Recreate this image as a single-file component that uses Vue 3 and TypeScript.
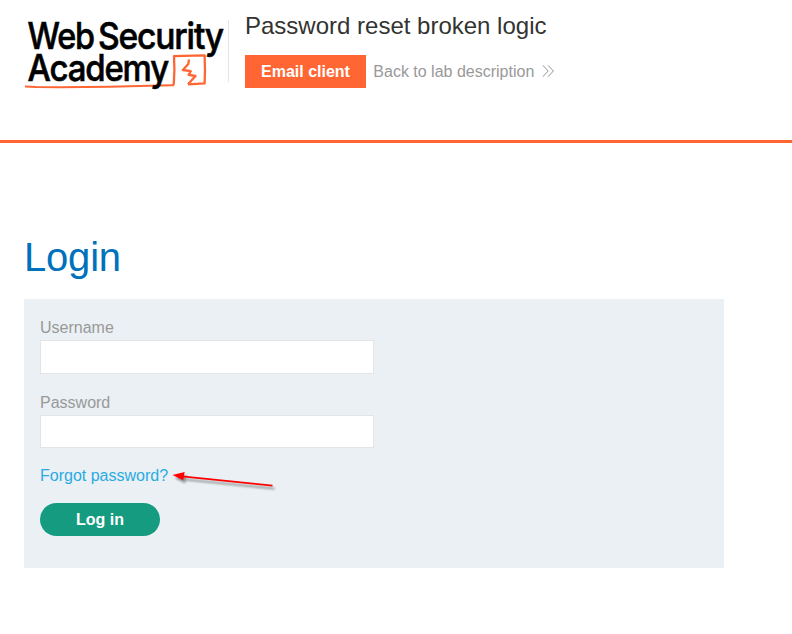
<script setup lang="ts">
import { ref } from 'vue'

const username = ref('')
const password = ref('')
</script>

<template>
  <div class="page">
    <header class="lab-header">
      <svg class="logo" viewBox="24 16 204 76" role="img" aria-label="Web Security Academy">
        <g class="sketch">
          <path class="bolt" d="M189 59.5 L188.3 64 L182.8 70 L190.8 71.2 L188.6 74.8 L195.5 76 L188 84.2" />
          <path d="M188 84.4 L204.6 83.4 L205 70 L204.6 55.4 L174 56.2 L174.4 70 L173.7 85" />
          <path class="line" d="M174 85.2 L160 85.4 L110 86.8 L60 87.3 L36 87 L25 86.6" />
        </g>
        <g class="wordmark">
          <text x="27.5" y="48.5" textLength="66.5" lengthAdjust="spacingAndGlyphs">Web</text>
          <text x="98" y="48.5" textLength="125" lengthAdjust="spacingAndGlyphs">Security</text>
          <text x="27.5" y="81" textLength="140.5" lengthAdjust="spacingAndGlyphs">Academy</text>
        </g>
      </svg>
      <div class="title-block">
        <h2>Password reset broken logic</h2>
        <div class="actions">
          <a class="email">Email client</a>
          <a class="back">Back to lab description
            <svg class="chevrons" viewBox="0 0 12 12"><path d="M0.8 0.3 L6.2 6 L0.8 11.7 M6 0.3 L11.4 6 L6 11.7" /></svg>
          </a>
        </div>
      </div>
    </header>

    <main>
      <h1>Login</h1>
      <form class="login" @submit.prevent>
        <label for="username">Username</label>
        <input id="username" v-model="username" class="user-field" type="text">
        <label for="password">Password</label>
        <input id="password" v-model="password" class="password-field" type="password">
        <div class="forgot">
          <a>Forgot password?</a>
          <svg class="arrow" viewBox="172 468 108 26">
            <g class="arrow-shape">
              <path class="shaft" d="M182 476.3 L272.5 485.6" />
              <path class="head" d="M172.5 475 L184.6 472 L183.2 480.3 Z" />
            </g>
          </svg>
        </div>
        <button type="submit">Log in</button>
      </form>
    </main>
  </div>
</template>

<style>
body {
  margin: 0;
  background: #fff;
}
</style>

<style scoped>
.page {
  min-height: 634px;
  font-family: "Liberation Sans", Arial, sans-serif;
  font-size: 16px;
  color: #999;
}
.lab-header {
  box-sizing: border-box;
  display: flex;
  align-items: flex-start;
  height: 143px;
  padding-left: 24px;
  border-bottom: 3px solid #ff6633;
}
.logo {
  width: 204px;
  height: 76px;
  margin-top: 16px;
  overflow: visible;
}
.wordmark {
  font-family: Inter, sans-serif;
  font-size: 37px;
  font-weight: 500;
  letter-spacing: -1.3px;
  fill: #000;
  stroke: #000;
  stroke-width: 0.6;
}
.sketch {
  fill: none;
  stroke: #ff6633;
  stroke-width: 2.3;
  stroke-linejoin: round;
}
.line {
  stroke-width: 2;
}
.title-block {
  height: 62px;
  margin-top: 20px;
  padding-left: 16px;
  border-left: 1px solid #e5e5e5;
}
h2 {
  margin: -8px 0 15px;
  font-size: 24px;
  line-height: 28px;
  font-weight: 400;
  color: #333332;
}
.actions {
  display: flex;
  align-items: center;
  gap: 7.4px;
}
.email {
  padding: 0 16px;
  line-height: 33px;
  font-weight: 700;
  color: #fff;
  background: #ff6633;
}
.back {
  display: flex;
  align-items: center;
  gap: 8px;
}
.chevrons {
  width: 12px;
  height: 12px;
  margin-top: -1px;
  fill: none;
  stroke: #888;
  stroke-width: 0.9;
}
main {
  padding: 91px 68px 0 24px;
}
h1 {
  margin: 0 0 19px;
  font-size: 40px;
  line-height: 46px;
  font-weight: 400;
  letter-spacing: -0.2px;
  color: #0071bc;
}
.login {
  box-sizing: border-box;
  display: flex;
  flex-direction: column;
  align-items: flex-start;
  width: 700px;
  height: 269px;
  padding: 16px;
  background: #eaf0f3;
}
label {
  line-height: 25px;
}
input {
  box-sizing: border-box;
  width: 334px;
  padding: 6px;
  border: 1px solid #e2e4e5;
  outline: none;
  font: inherit;
  color: #333;
  background: #fff;
}
.user-field {
  height: 34px;
  margin-bottom: 16px;
}
.password-field {
  height: 33px;
  margin-bottom: 15px;
}
.forgot {
  display: flex;
  height: 26px;
  margin-bottom: 14px;
  line-height: 25px;
  color: #29abe2;
}
.arrow {
  width: 108px;
  height: 26px;
  margin: 5px 0 0 4px;
}
.arrow-shape {
  filter: drop-shadow(2px 3px 1px rgba(0, 0, 0, 0.4));
}
.shaft {
  fill: none;
  stroke: #f00;
  stroke-width: 1.7;
}
.head {
  fill: #f00;
}
button {
  width: 120px;
  height: 33px;
  padding: 0;
  border: 0;
  border-radius: 17px;
  font: 700 16px "Liberation Sans", Arial, sans-serif;
  color: #fff;
  background: #159c80;
}
</style>
